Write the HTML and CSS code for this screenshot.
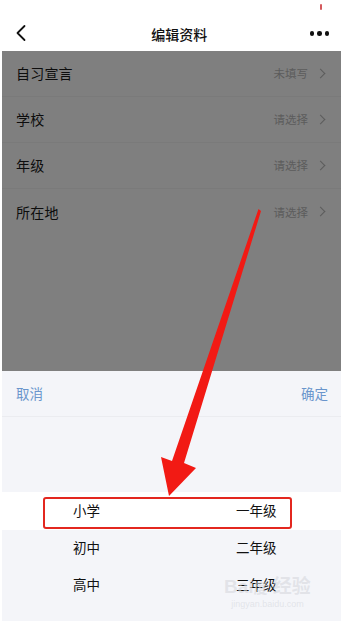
FILE: index.html
```html
<!DOCTYPE html>
<html lang="zh">
<head>
<meta charset="utf-8">
<link rel="stylesheet" href="styles.css">
</head>
<body>
<div class="screen">
  <div class="status"><span class="status-mark"></span></div>
  <header class="nav">
    <svg class="back" width="12" height="18" viewBox="0 0 12 18"><path d="M9.5 2 L2.5 9 L9.5 16" fill="none" stroke="#111" stroke-width="1.8" stroke-linecap="round" stroke-linejoin="round"/></svg>
    <div class="title">编辑资料</div>
    <div class="more"><i></i><i></i><i></i></div>
  </header>
  <section class="list">
    <div class="row"><span class="label">自习宣言</span><span class="value">未填写<b class="chev"></b></span></div>
    <div class="row"><span class="label">学校</span><span class="value">请选择<b class="chev"></b></span></div>
    <div class="row"><span class="label">年级</span><span class="value">请选择<b class="chev"></b></span></div>
    <div class="row"><span class="label">所在地</span><span class="value">请选择<b class="chev"></b></span></div>
  </section>
  <section class="sheet">
    <div class="toolbar"><span class="btn">取消</span><span class="btn">确定</span></div>
    <div class="picker">
      <div class="prow"></div>
      <div class="prow"></div>
      <div class="prow selected"><span class="c1">小学</span><span class="c2">一年级</span></div>
      <div class="prow"><span class="c1">初中</span><span class="c2">二年级</span></div>
      <div class="prow"><span class="c1">高中</span><span class="c2">三年级</span></div>
    </div>
  </section>
  <div class="highlight"></div>
  <svg class="arrow" width="343" height="621" viewBox="0 0 343 621">
    <polygon points="258.5,209 261,211 184,463 196,468 169,496 161,457 172,461" fill="#f21a14"/>
  </svg>
  <div class="watermark"><span class="wm1">Bai<span class="paw">度</span> 经验</span><span class="wm2">jingyan.baidu.com</span></div>
</div>
</body>
</html>
```
FILE: styles.css
```css
* { box-sizing: border-box; }
html, body { margin: 0; padding: 0; background: #fff; }
body { font-family: "Noto Sans CJK SC", "Noto Sans", sans-serif; }
.screen {
  position: relative;
  width: 343px;
  height: 621px;
  overflow: hidden;
  padding: 0 2px;
  display: flex;
  flex-direction: column;
}
.status { height: 16px; position: relative; }
.status-mark {
  position: absolute; left: 318px; top: 4px;
  width: 2px; height: 6px; background: #d4595d; border-radius: 1px;
}
.nav {
  height: 35px;
  display: flex; align-items: center; justify-content: space-between;
  padding: 0 12px 0 13px;
  background: #fff;
}
.back { display: block; margin-top: -1px; }
.title { font-size: 14px; color: #111; font-weight: 500; margin-left: 22px; }
.more { display: flex; gap: 3px; }
.more i { width: 4.5px; height: 4.5px; border-radius: 50%; background: #111; display: block; }
.list {
  height: 320px;
  background: #7f7f7f;
}
.row {
  height: 46px;
  display: flex; align-items: center; justify-content: space-between;
  padding: 0 17px 1px 14px;
  border-bottom: 1px solid #7a7a7a;
}
.row:last-child { border-bottom: none; }
.label { font-size: 14px; color: #0d0d0d; letter-spacing: 0.2px; }
.value { font-size: 11.5px; color: #5c5c5c; display: flex; align-items: center; }
.chev {
  display: block; width: 7px; height: 7px;
  border-right: 1.3px solid #5c5c5c; border-top: 1.3px solid #5c5c5c;
  transform: rotate(45deg); margin-left: 9px;
}
.sheet { flex: 1; background: #f4f5f9; }
.toolbar {
  height: 46px;
  display: flex; align-items: center; justify-content: space-between;
  padding: 0 13px 1px 14px;
  border-bottom: 1px solid #ebecf0;
}
.btn { font-size: 13.5px; color: #6a95cc; }
.picker { display: flex; flex-direction: column; }
.prow {
  height: 37px;
  display: flex; align-items: center;
  padding-bottom: 3px;
  font-size: 13.5px; color: #111;
}
.prow:first-child { height: 38px; }
.prow.selected { background: #fff; height: 38px; }
.c1 { margin-left: 71px; width: 100px; }
.c2 { margin-left: 63px; }
.highlight {
  position: absolute; left: 43px; top: 497px;
  width: 249px; height: 32px;
  border: 2.5px solid #e3271f; border-radius: 3px;
}
.arrow { position: absolute; left: 0; top: 0; pointer-events: none; }
.watermark {
  position: absolute; left: 224px; top: 577px;
  display: flex; flex-direction: column; align-items: center;
  color: rgba(214, 216, 222, 0.6);
  font-family: "Liberation Sans", "Noto Sans CJK SC", sans-serif;
}
.wm1 { font-size: 19px; font-weight: bold; line-height: 20px; }
.paw { font-size: 14px; }
.wm2 { font-size: 9px; line-height: 12px; }
```
